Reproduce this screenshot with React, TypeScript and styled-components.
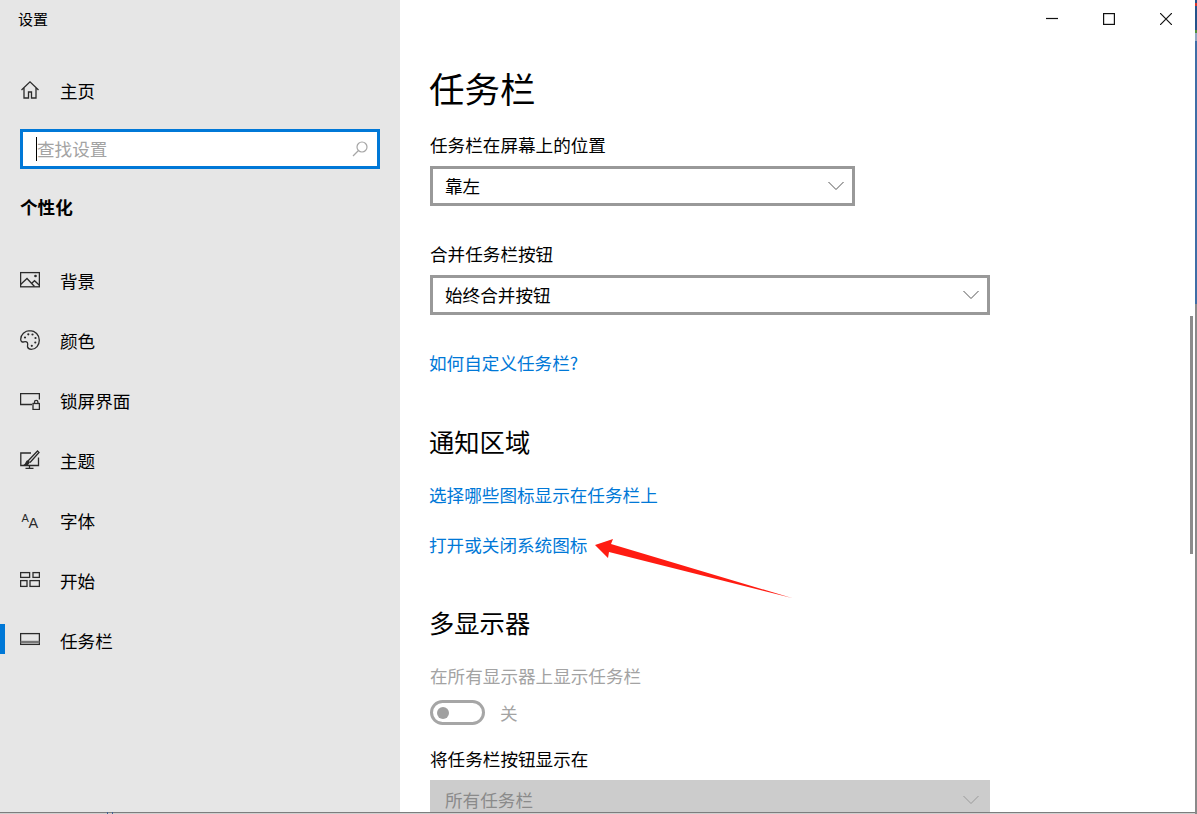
import React from "react";
import styled, { createGlobalStyle } from "styled-components";

const Global = createGlobalStyle`
  html, body { margin: 0; padding: 0; background: #d4d4d4; }
  body { font-family: "Noto Sans CJK SC", "Liberation Sans", sans-serif; color: #000; }
`;

const Screen = styled.div`
  position: relative;
  width: 1197px;
  height: 814px;
  display: flex;
  overflow: hidden;
`;
const WindowColumn = styled.div`
  width: 1195px;
  height: 814px;
  display: flex;
  flex-direction: column;
`;
const WindowBody = styled.div`
  flex: 1;
  min-height: 0;
  display: flex;
`;
const BottomEdge = styled.div`
  height: 2px;
  flex: none;
  background:
    linear-gradient(to right,
      transparent 107px, #3f5f93 107px, #3f5f93 108px, transparent 108px,
      transparent 112px, #3f5f93 112px, #3f5f93 113px, transparent 113px),
    linear-gradient(to bottom, #7d7d7d 0, #7d7d7d 1px, #cfcfcf 1px, #cfcfcf 2px);
`;
const RightEdge = styled.div`
  width: 2px;
  height: 814px;
  background: linear-gradient(
    to bottom,
    #24528a 0, #24528a 3px, #d8342a 3px, #d8342a 6px, #24528a 6px, #24528a 30px,
    #4f8f3a 30px, #4f8f3a 33px, #8ea4c2 33px, #8ea4c2 41px, #3f6ea6 41px, #3f6ea6 304px,
    #8a8a8a 304px, #8a8a8a 100%
  );
`;
const Sidebar = styled.aside`
  width: 400px;
  flex: none;
  background: #e6e6e6;
  display: flex;
  flex-direction: column;
`;
const AppTitle = styled.div`
  height: 40px;
  padding-left: 18px;
  font-size: 15px;
  line-height: 38px;
`;
const NavRow = styled.div<{ $top?: number; $active?: boolean }>`
  position: relative;
  height: 60px;
  margin-top: ${(p) => p.$top ?? 0}px;
  padding-left: 20px;
  display: flex;
  align-items: center;
  gap: 20px;
  font-size: 17.6px;
  &::before {
    content: "";
    display: ${(p) => (p.$active ? "block" : "none")};
    position: absolute;
    left: 0;
    top: 14px;
    width: 5px;
    height: 30px;
    background: #0078d7;
  }
`;
const NavIcon = styled.svg`
  width: 20px;
  height: 20px;
  flex: none;
  fill: none;
  stroke: #2b2b2b;
  stroke-width: 1.3;
`;
const SearchBox = styled.div`
  margin: 9px 20px 0;
  height: 40px;
  box-sizing: border-box;
  border: 3px solid #0078d7;
  background: #fff;
  display: flex;
  align-items: center;
  justify-content: space-between;
  padding: 0 9px 0 13px;
`;
const SearchText = styled.span`
  border-left: 1px solid #000;
  height: 24px;
  line-height: 24px;
  font-size: 17.6px;
  color: #a3a3a3;
`;
const SearchIcon = styled.svg`
  width: 16px;
  height: 16px;
  fill: none;
  stroke: #a6a6a6;
  stroke-width: 1.2;
`;
const GroupTitle = styled.div`
  margin: 23px 0 0 20px;
  height: 30px;
  line-height: 29px;
  font-size: 17.6px;
  font-weight: 700;
`;
const Main = styled.main`
  flex: 1;
  min-width: 0;
  background: #fff;
  padding-left: 30px;
  overflow: hidden;
`;
const Controls = styled.div`
  height: 36px;
  margin-bottom: 27px;
  display: flex;
  justify-content: flex-end;
  padding-right: 23px;
  gap: 45px;
  align-items: flex-start;
`;
const ControlIcon = styled.svg`
  width: 12px;
  height: 12px;
  margin-top: 13px;
  fill: none;
  stroke: #111;
  stroke-width: 1.2;
`;
const PageTitle = styled.h1`
  margin: 0 0 0 -1px;
  height: 50px;
  line-height: 49px;
  font-size: 35.5px;
  font-weight: 400;
`;
const SectionTitle = styled.h2<{ $top: number }>`
  margin: ${(p) => p.$top}px 0 0 -1px;
  height: 36px;
  line-height: 33px;
  font-size: 25.3px;
  font-weight: 400;
`;
const Label = styled.div<{ $top: number; $muted?: boolean }>`
  margin-top: ${(p) => p.$top}px;
  height: 24px;
  line-height: 22px;
  font-size: 17.6px;
  color: ${(p) => (p.$muted ? "#a3a3a3" : "#000")};
`;
const LinkText = styled.a<{ $top: number }>`
  display: block;
  margin: ${(p) => p.$top}px 0 0 -1px;
  height: 24px;
  line-height: 23px;
  font-size: 17.6px;
  color: #0078d7;
`;
const Select = styled.div<{ $width: number; $disabled?: boolean }>`
  margin-top: 8px;
  width: ${(p) => p.$width}px;
  height: 40px;
  box-sizing: border-box;
  border: 3px solid ${(p) => (p.$disabled ? "#cccccc" : "#999999")};
  background: ${(p) => (p.$disabled ? "#cccccc" : "#fff")};
  color: ${(p) => (p.$disabled ? "#8a8a8a" : "#000")};
  display: flex;
  align-items: center;
  justify-content: space-between;
  padding: 0 8px 2px 12px;
  font-size: 17.6px;
`;
const Chevron = styled.svg<{ $disabled?: boolean }>`
  width: 16px;
  height: 10px;
  margin-top: 2px;
  fill: none;
  stroke: ${(p) => (p.$disabled ? "#999" : "#555")};
  stroke-width: 1;
`;
const ToggleRow = styled.div`
  margin-top: 11px;
  height: 25px;
  display: flex;
  align-items: center;
  gap: 15px;
  font-size: 17.6px;
  color: #a3a3a3;
`;
const Toggle = styled.span`
  width: 55px;
  height: 25px;
  box-sizing: border-box;
  border: 3px solid #a6a6a6;
  border-radius: 13px;
  display: flex;
  align-items: center;
  padding-left: 4px;
  &::after {
    content: "";
    width: 12px;
    height: 12px;
    border-radius: 50%;
    background: #a0a0a0;
  }
`;
const ScrollThumb = styled.div`
  position: absolute;
  left: 1190px;
  top: 316px;
  width: 3px;
  height: 238px;
  background: #8c8c8c;
`;
const Annotation = styled.svg`
  position: absolute;
  left: 590px;
  top: 535px;
  width: 205px;
  height: 66px;
`;

const Chev = ({ disabled }: { disabled?: boolean }) => (
  <Chevron $disabled={disabled} viewBox="0 0 16 10">
    <path d="M.5 1 8 8.5 15.5 1" />
  </Chevron>
);

const items: { label: string; icon: React.ReactNode }[] = [
  {
    label: "背景",
    icon: (
      <>
        <rect x="0.6" y="2.6" width="18.8" height="14.2" />
        <path d="M.6 14.5 7 8.5l7.5 8M11.5 13.5l3-2.8 4.9 4.6" />
        <circle cx="15.5" cy="6" r=".7" />
      </>
    ),
  },
  {
    label: "颜色",
    icon: (
      <>
        <path d="M10 .7C4.8.7.7 4.4.7 9.2c0 2.4 1.6 3.2 3.2 2.6 1.9-.7 3.8.2 3.8 2.2 0 1.2-.4 2-.1 3 .4 1.5 1.9 2.3 3.6 2.3 4.9 0 8.1-4.3 8.1-9.1C19.3 5 15.3.7 10 .7Z" />
        <g fill="#2b2b2b" stroke="none">
          <circle cx="5" cy="7.5" r="1.1" />
          <circle cx="8.3" cy="4.3" r="1.1" />
          <circle cx="12.5" cy="4.5" r="1.1" />
          <circle cx="15.5" cy="8" r="1.1" />
          <circle cx="15.3" cy="12.5" r="1.1" />
          <circle cx="11.8" cy="15.8" r="1.1" />
        </g>
      </>
    ),
  },
  {
    label: "锁屏界面",
    icon: (
      <>
        <path d="M12 14.5H.6V3.6h18.8v6" />
        <rect x="13" y="13.5" width="6.4" height="6" />
        <path d="M14.5 13.5V12a1.700 1.700 0 0 1 3.400 0v1.500" />
      </>
    ),
  },
  {
    label: "主题",
    icon: (
      <>
        <path d="M11 5H.8v12.500h17.700V9.500M9.500 17.500v3M5.500 20.300h8" transform="translate(0 -2)" />
        <path d="m8 11 9.500-10 1.500 1.500L10 12.500" />
        <path d="M5 14.500c2 .3 3.500-.3 4.200-2.200L7.800 11C6.200 11 6.300 13.500 5 14.500Z" fill="#2b2b2b" />
      </>
    ),
  },
  {
    label: "字体",
    icon: (
      <text fontFamily="Liberation Sans" stroke="none" fill="#2b2b2b">
        <tspan x="1.5" y="12" fontSize="11">A</tspan>
        <tspan x="8.500" y="18" fontSize="14.500">A</tspan>
      </text>
    ),
  },
  {
    label: "开始",
    icon: (
      <>
        <rect x="0.6" y="2.600" width="9" height="4.800" />
        <rect x="13" y="2.600" width="6.400" height="4.800" />
        <rect x="0.6" y="10.600" width="6.400" height="5.800" />
        <rect x="10" y="10.600" width="9.400" height="5.800" />
      </>
    ),
  },
  {
    label: "任务栏",
    icon: (
      <>
        <rect x="0.6" y="3.600" width="18.800" height="10.800" />
        <path d="M.6 12h18.800" strokeWidth="2.400" stroke="#777" />
      </>
    ),
  },
];

export default function App() {
  return (
    <Screen>
      <Global />
      <WindowColumn>
        <WindowBody>
          <Sidebar>
            <AppTitle>设置</AppTitle>
            <NavRow $top={20}>
              <NavIcon viewBox="0 0 20 20">
                <path d="M1.500 10 10 1.800 18.500 10M4 8v10h4.500v-6h3v6H16V8" />
              </NavIcon>
              主页
            </NavRow>
            <SearchBox>
              <SearchText>查找设置</SearchText>
              <SearchIcon viewBox="0 0 16 16">
                <circle cx="10" cy="6" r="5" />
                <path d="M6.500 9.500 1 15" />
              </SearchIcon>
            </SearchBox>
            <GroupTitle>个性化</GroupTitle>
            {items.map((item, i) => (
              <NavRow key={item.label} $top={i === 0 ? 28 : 0} $active={item.label === "任务栏"}>
                <NavIcon viewBox="0 0 20 20">{item.icon}</NavIcon>
                {item.label}
              </NavRow>
            ))}
          </Sidebar>
          <Main>
            <Controls>
              <ControlIcon viewBox="0 0 12 12">
                <path d="M0 5.500h12" />
              </ControlIcon>
              <ControlIcon viewBox="0 0 12 12">
                <rect x=".6" y=".6" width="10.800" height="10.800" />
              </ControlIcon>
              <ControlIcon viewBox="0 0 12 12">
                <path d="m0 0 12 12M12 0 0 12" />
              </ControlIcon>
            </Controls>
            <PageTitle>任务栏</PageTitle>
            <Label $top={21}>任务栏在屏幕上的位置</Label>
            <Select $width={425}>
              靠左
              <Chev />
            </Select>
            <Label $top={37}>合并任务栏按钮</Label>
            <Select $width={560}>
              始终合并按钮
              <Chev />
            </Select>
            <LinkText $top={36}>如何自定义任务栏?</LinkText>
            <SectionTitle $top={50}>通知区域</SectionTitle>
            <LinkText $top={22}>选择哪些图标显示在任务栏上</LinkText>
            <LinkText $top={26}>打开或关闭系统图标</LinkText>
            <SectionTitle $top={49}>多显示器</SectionTitle>
            <Label $top={23} $muted>
              在所有显示器上显示任务栏
            </Label>
            <ToggleRow>
              <Toggle />关
            </ToggleRow>
            <Label $top={23}>将任务栏按钮显示在</Label>
            <Select $width={560} $disabled>
              所有任务栏
              <Chev disabled />
            </Select>
          </Main>
        </WindowBody>
        <BottomEdge />
      </WindowColumn>
      <RightEdge />
      <ScrollThumb />
      <Annotation viewBox="590 535 205 66">
        <polygon points="595,545 613,539 611,544 792,598 609,552 608,558" fill="#ff1c12" />
      </Annotation>
    </Screen>
  );
}
